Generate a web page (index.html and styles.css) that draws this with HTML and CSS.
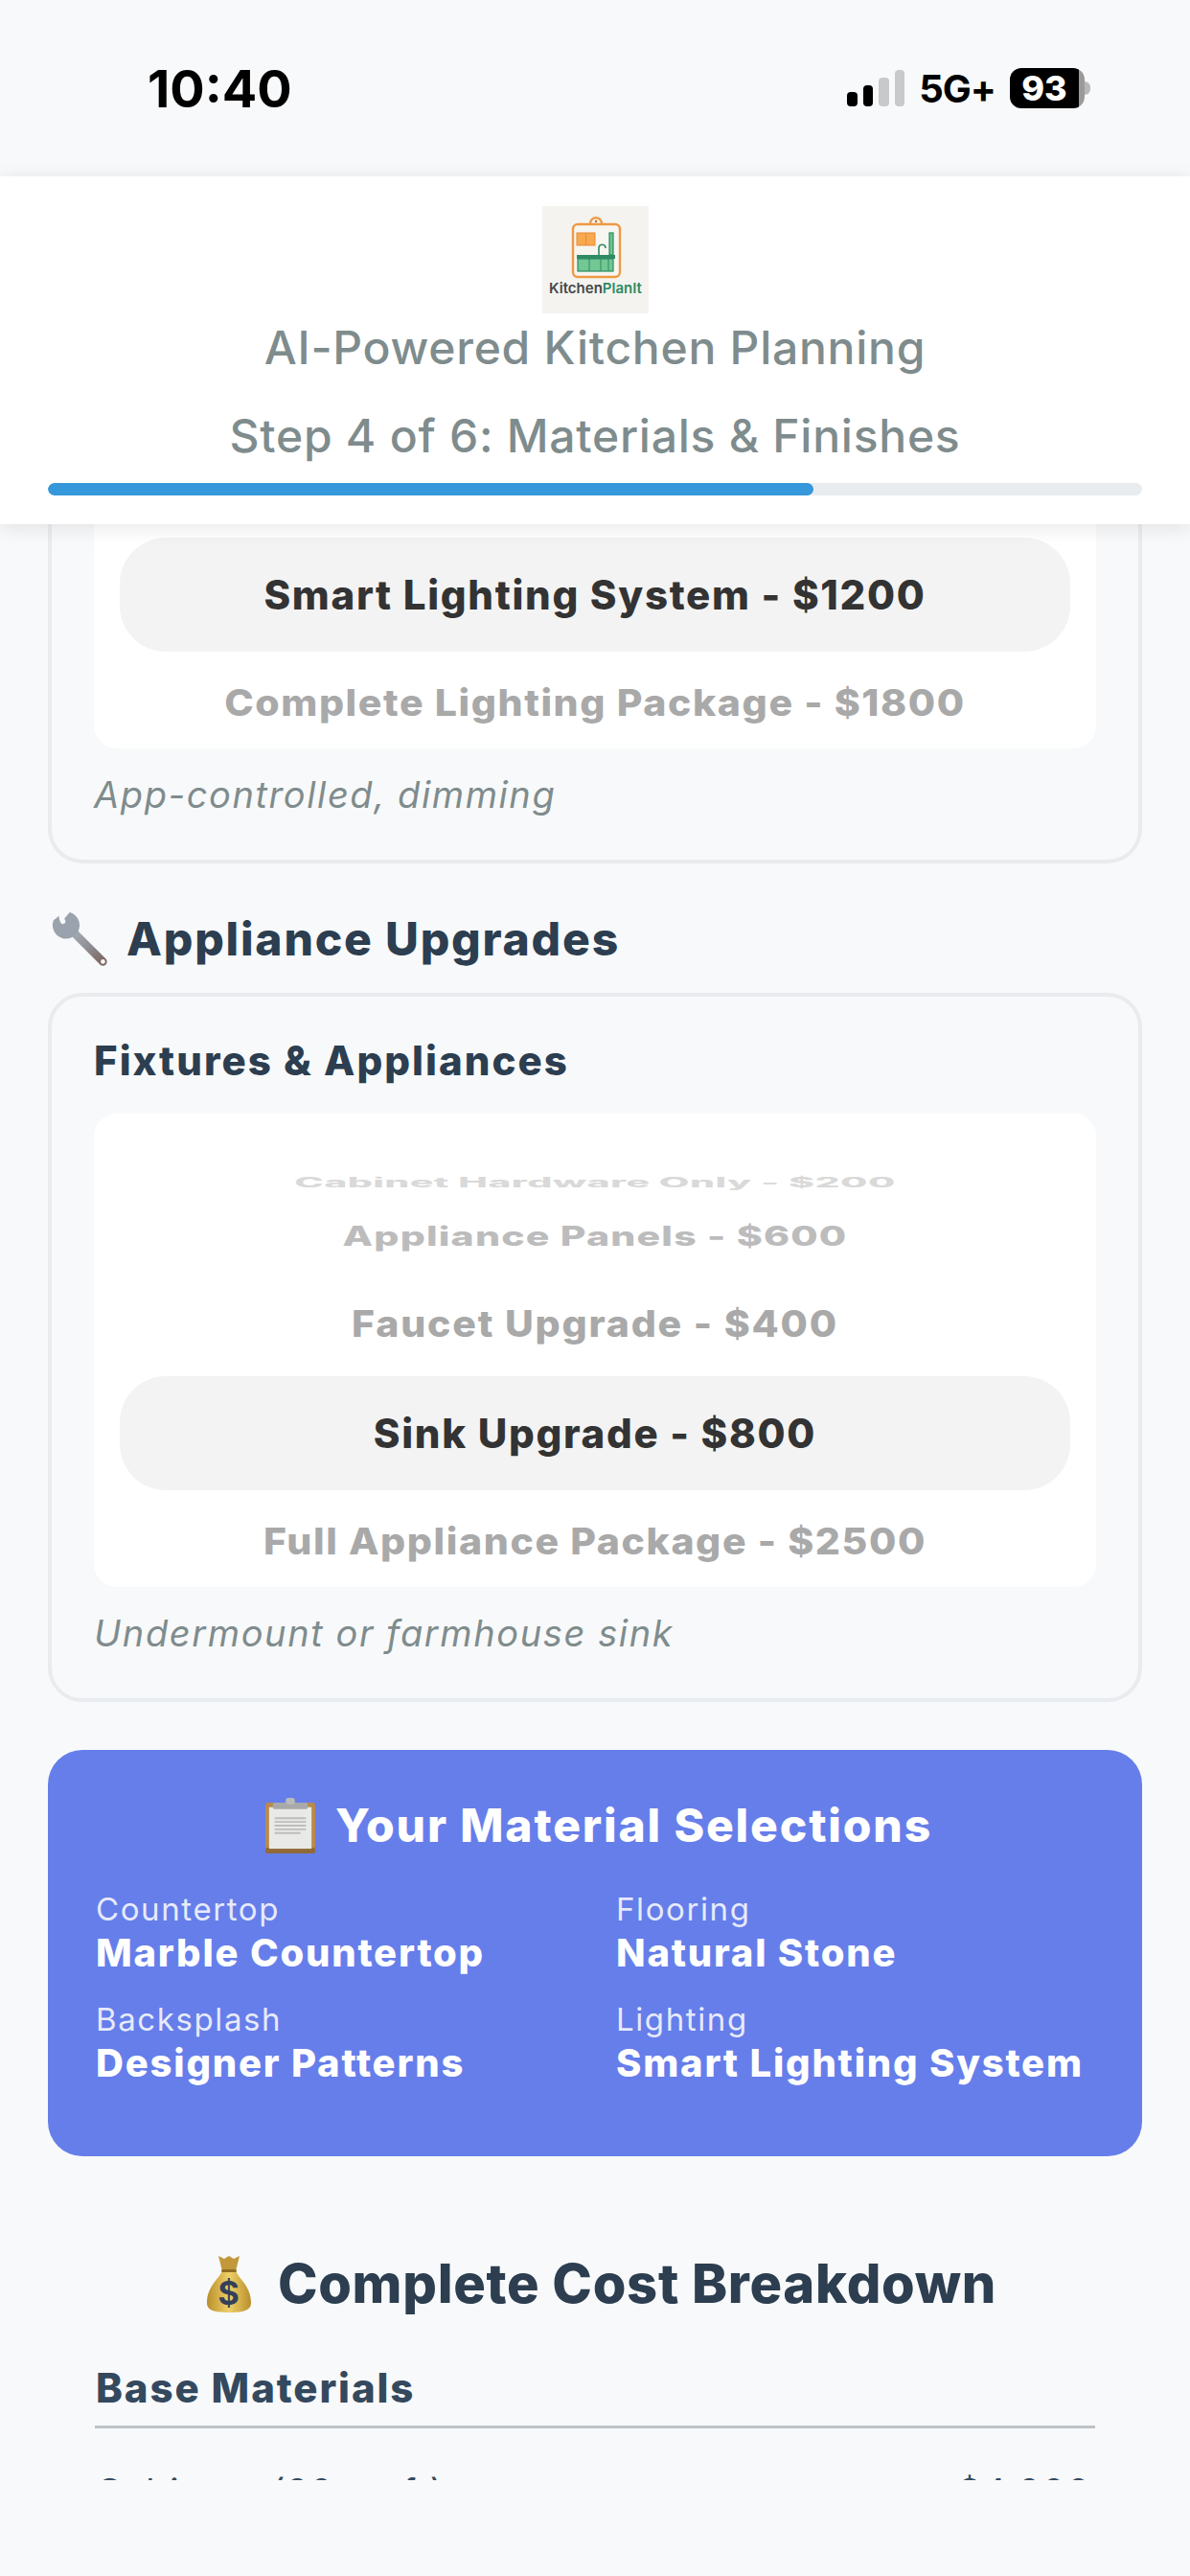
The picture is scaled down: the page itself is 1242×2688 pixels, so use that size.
FILE: index.html
```html
<!DOCTYPE html>
<html lang="en">
<head>
    <meta charset="UTF-8">
    <meta name="viewport" content="width=device-width, initial-scale=1.0">
    <title>KitchenPlanIt</title>
    <link rel="stylesheet" href="styles.css">
</head>
<body>
    <div class="status-bar">
        <span class="time">10:40</span>
        <div class="status-right">
            <div class="signal">
                <i class="bar bar1"></i>
                <i class="bar bar2"></i>
                <i class="bar bar3 off"></i>
                <i class="bar bar4 off"></i>
            </div>
            <span class="network">5G+</span>
            <div class="battery"><span>93</span></div>
            <i class="battery-nub"></i>
        </div>
    </div>

    <header class="header">
        <svg class="logo" viewBox="0 0 111 112">
            <rect width="111" height="112" fill="#f4f3ef"/>
            <path d="M50 19c0-9 12-9 12 0" fill="none" stroke="#ee9a45" stroke-width="2.4"/>
            <circle cx="56" cy="16" r="1.2" fill="#c8662a"/>
            <rect x="32" y="19" width="49" height="55" rx="5" fill="#f7f5f0" stroke="#ee9a45" stroke-width="2.4"/>
            <rect x="36" y="28" width="19" height="13" fill="#f7a94e" stroke="#e88c35"/>
            <path d="M45.500 28v13" stroke="#e88c35"/>
            <rect x="70" y="28" width="4" height="23" fill="#6fc48f" stroke="#2e8b63" stroke-width="1.2"/>
            <path d="M59 51v-7c0-5 7-5 7 0" fill="none" stroke="#2e8b63" stroke-width="1.600"/>
            <rect x="37" y="55" width="37" height="13" fill="#72c793" stroke="#2e8b63" stroke-width="1.200"/>
            <path d="M49 55v13M61 55v13M69 55v13" stroke="#2e8b63"/>
            <rect x="36" y="51" width="40" height="4" fill="#2e8b63"/>
            <text x="55.500" y="91" class="logo-text" text-anchor="middle"><tspan fill="#45484a">Kitchen</tspan><tspan fill="#2e8b63">PlanIt</tspan></text>
        </svg>
        <p class="tagline">AI-Powered Kitchen Planning</p>
        <p class="step">Step 4 of 6: Materials &amp; Finishes</p>
        <div class="progress"><div class="progress-fill"></div></div>
    </header>

    <main class="content">
        <section class="card card-cut">
            <div class="picker picker-cut">
                <div class="opt selected">Smart Lighting System - $1200</div>
                <div class="opt last">Complete Lighting Package - $1800</div>
            </div>
            <p class="note">App-controlled, dimming</p>
        </section>

        <h2 class="section-title">
            <svg class="wrench" viewBox="0 0 64 64">
                <defs>
                    <linearGradient id="steel" x1="0" y1="0" x2="1" y2="1">
                        <stop offset="0" stop-color="#a9b1ba"/>
                        <stop offset="0.55" stop-color="#8e8f94"/>
                        <stop offset="1" stop-color="#7d6560"/>
                    </linearGradient>
                </defs>
                <path d="M21 21L57 57" stroke="url(#steel)" stroke-width="9" stroke-linecap="round"/>
                <path d="M2 11A15 15 0 1 0 20 2L14 9Q17 14 13 15Q9 16 8 6Z" fill="#9aa3ad"/>
                <circle cx="57" cy="57" r="2.500" fill="#f8f9fa"/>
            </svg>
            Appliance Upgrades
        </h2>

        <section class="card">
            <h3 class="card-label">Fixtures &amp; Appliances</h3>
            <div class="picker">
                <div class="opt far">Cabinet Hardware Only - $200</div>
                <div class="opt near">Appliance Panels - $600</div>
                <div class="opt close">Faucet Upgrade - $400</div>
                <div class="opt selected">Sink Upgrade - $800</div>
                <div class="opt last">Full Appliance Package - $2500</div>
            </div>
            <p class="note">Undermount or farmhouse sink</p>
        </section>

        <section class="summary">
            <h2 class="summary-title">
                <svg class="clipboard" viewBox="0 0 54 60">
                    <rect x="0" y="5" width="54" height="55" rx="3" fill="#b88a4c"/>
                    <rect x="0" y="54" width="54" height="6" rx="2" fill="#8f6a38"/>
                    <rect x="4" y="10" width="46" height="45" fill="#e9e9e7"/>
                    <path d="M10 22h34M10 26h34M10 30h34M10 34h34M10 38h28" stroke="#bdbdbb" stroke-width="2"/>
                    <rect x="8" y="5" width="38" height="7" rx="2" fill="#a8a9a8"/>
                    <rect x="22" y="0" width="10" height="7" rx="3" fill="#b9bab9"/>
                </svg>
                Your Material Selections
            </h2>
            <div class="summary-grid">
                <div><div class="sum-label">Countertop</div><div class="sum-value">Marble Countertop</div></div>
                <div><div class="sum-label">Flooring</div><div class="sum-value">Natural Stone</div></div>
                <div><div class="sum-label">Backsplash</div><div class="sum-value">Designer Patterns</div></div>
                <div><div class="sum-label">Lighting</div><div class="sum-value">Smart Lighting System</div></div>
            </div>
        </section>

        <section class="cost">
            <h2 class="cost-title">
                <svg class="bag" viewBox="0 0 48 60">
                    <defs>
                        <linearGradient id="gold" x1="0" y1="0" x2="1" y2="0">
                            <stop offset="0" stop-color="#b98f2c"/>
                            <stop offset="0.5" stop-color="#efcf68"/>
                            <stop offset="1" stop-color="#b98f2c"/>
                        </linearGradient>
                    </defs>
                    <path d="M13 1L19 4L24 1L29 4L35 1L31 17H17Z" fill="#c2983a"/>
                    <path d="M17 16H31C33 24 47 32 47 50C47 57 41 60 24 60C7 60 1 57 1 50C1 32 15 24 17 16Z" fill="url(#gold)"/>
                    <rect x="16" y="15" width="16" height="3" rx="1.500" fill="#8f6d22"/>
                    <text x="24" y="52" class="bag-sign" text-anchor="middle">$</text>
                </svg>
                Complete Cost Breakdown
            </h2>
            <h3 class="cost-heading">Base Materials</h3>
            <div class="cost-row"><span>Cabinets (20 sq ft)</span><span>$4,000</span></div>
        </section>
    </main>
</body>
</html>
```

FILE: styles.css
```css
* {
    box-sizing: border-box;
}

body {
    margin: 0;
    background: #f8f9fa;
    font-family: "Inter", "Liberation Sans", sans-serif;
}

h2, h3, p {
    margin: 0;
}

/* status bar */
.status-bar {
    height: 184px;
    padding: 0 104px 0 154px;
    display: flex;
    align-items: center;
    justify-content: space-between;
}

.time {
    font-size: 54px;
    font-weight: 700;
    color: #000;
}

.status-right {
    display: flex;
    align-items: center;
}

.signal {
    display: flex;
    align-items: flex-end;
    gap: 6px;
    margin-right: 15px;
}

.bar {
    width: 10.5px;
    border-radius: 4px;
    background: #000;
}

.bar1 { height: 15px; }
.bar2 { height: 22px; }
.bar3 { height: 30px; }
.bar4 { height: 38px; }
.bar.off { background: #c8c9cb; }

.network {
    font-size: 40px;
    font-weight: 700;
    letter-spacing: -1px;
    color: #000;
    margin-right: 15px;
}

.battery {
    width: 78px;
    height: 42px;
    border-radius: 12px;
    background: linear-gradient(90deg, #000 92%, #9a9a9a 92%);
    color: #fff;
    font-size: 36px;
    font-weight: 800;
    display: flex;
    align-items: center;
    justify-content: center;
    padding-right: 6px;
}

.battery-nub {
    width: 6px;
    height: 14px;
    background: #b9b9b9;
    border-radius: 0 7px 7px 0;
}

/* header */
.header {
    position: relative;
    z-index: 2;
    height: 363px;
    padding: 31px 50px 0;
    background: #fff;
    box-shadow: 0 3px 20px rgba(0, 0, 0, 0.1);
    text-align: center;
    color: #7f8c8d;
}

.logo {
    display: block;
    width: 111px;
    height: 112px;
    margin: 0 auto;
}

.logo-text {
    font-size: 15px;
    font-weight: 600;
}

.tagline, .step {
    font-size: 48px;
    line-height: 60px;
    font-weight: 500;
    letter-spacing: 0.75px;
    white-space: nowrap;
}

.tagline {
    margin-top: 6px;
}

.step {
    margin-top: 32px;
}

.progress {
    height: 13px;
    margin-top: 19px;
    border-radius: 7px;
    background: #e9ecef;
    overflow: hidden;
}

.progress-fill {
    width: 70%;
    height: 100%;
    border-radius: 7px;
    background: #3498db;
}

/* scrolled content */
.content {
    height: 2041px;
    padding: 0 50px;
    overflow: hidden;
}

.card {
    border: 4px solid #e9ecef;
    border-radius: 36px;
    padding: 42px 44px 45px;
}

.card-cut {
    border-top: 0;
    border-radius: 0 0 36px 36px;
    padding-top: 0;
}

.section-title {
    margin: 49px 0 26px;
    display: flex;
    align-items: center;
    font-size: 48px;
    line-height: 60px;
    font-weight: 800;
    letter-spacing: 1.8px;
    color: #2c3e50;
}

.wrench {
    width: 60px;
    height: 60px;
    margin: 0 18px 0 4px;
}

.card-label {
    font-size: 42px;
    line-height: 50px;
    font-weight: 800;
    letter-spacing: 2.05px;
    color: #2c3e50;
    margin-bottom: 30px;
}

/* wheel picker */
.picker {
    background: #fff;
    border-radius: 24px;
    height: 494px;
    padding-top: 48px;
}

.picker-cut {
    height: 234px;
    padding-top: 14px;
    border-radius: 0 0 24px 24px;
}

.opt {
    display: flex;
    align-items: center;
    justify-content: center;
    font-size: 41px;
    font-weight: 800;
    letter-spacing: 1.6px;
    white-space: nowrap;
}

.selected {
    height: 119px;
    margin: 0 27px;
    border-radius: 48px;
    background: #f3f3f3;
    color: #333;
    font-size: 42px;
    letter-spacing: 1.7px;
}

.last {
    height: 101px;
    padding-top: 4px;
    color: #a9a9a9;
    transform: scaleY(0.93);
}

.far {
    height: 48px;
    color: #d9d9d9;
    letter-spacing: 0.4px;
    transform: scaleY(0.34);
}

.near {
    height: 64px;
    color: #bcbcbc;
    letter-spacing: 1.2px;
    transform: scaleY(0.68);
}

.close {
    height: 114px;
    padding-top: 4px;
    color: #a9a9a9;
    letter-spacing: 1.8px;
    transform: scaleY(0.93);
}

.note {
    margin-top: 25px;
    font-size: 38px;
    line-height: 46px;
    font-style: italic;
    letter-spacing: 1.6px;
    color: #7f8c8d;
}

/* selections summary */
.summary {
    margin-top: 50px;
    height: 424px;
    padding: 49px 36px 0 50px;
    border-radius: 36px;
    background: #667eea;
    color: #fff;
}

.summary-title {
    display: flex;
    align-items: center;
    justify-content: center;
    padding-right: 6px;
    font-size: 48px;
    line-height: 60px;
    font-weight: 800;
    letter-spacing: 1.85px;
}

.clipboard {
    width: 52px;
    height: 60px;
    margin-right: 21px;
}

.summary-grid {
    margin-top: 37px;
    display: grid;
    grid-template-columns: 513px 1fr;
    column-gap: 30px;
    row-gap: 25px;
}

.sum-label {
    font-size: 33px;
    line-height: 40px;
    letter-spacing: 1.6px;
    color: rgba(255, 255, 255, 0.85);
}

.sum-value {
    margin-top: 2px;
    font-size: 40px;
    line-height: 48px;
    font-weight: 800;
    letter-spacing: 1.8px;
}

/* cost breakdown */
.cost {
    padding: 0 49px;
}

.cost-title {
    margin-top: 98px;
    padding-left: 13px;
    display: flex;
    align-items: center;
    justify-content: center;
    font-size: 56px;
    line-height: 70px;
    font-weight: 800;
    letter-spacing: 0.7px;
    color: #2c3e50;
    white-space: nowrap;
}

.bag {
    width: 48px;
    height: 60px;
    margin-right: 27px;
}

.bag-sign {
    font-size: 34px;
    font-weight: 700;
    fill: #34405a;
}

.cost-heading {
    margin-top: 49px;
    padding: 0 1px 14px;
    font-size: 42px;
    line-height: 50px;
    font-weight: 800;
    letter-spacing: 1.9px;
    color: #34495e;
    border-bottom: 3px solid #bdc3c7;
}

.cost-row {
    margin-top: 43px;
    padding: 0 4px 0 1px;
    display: flex;
    justify-content: space-between;
    font-size: 38px;
    line-height: 46px;
    letter-spacing: 1.6px;
    color: #34495e;
}
```
